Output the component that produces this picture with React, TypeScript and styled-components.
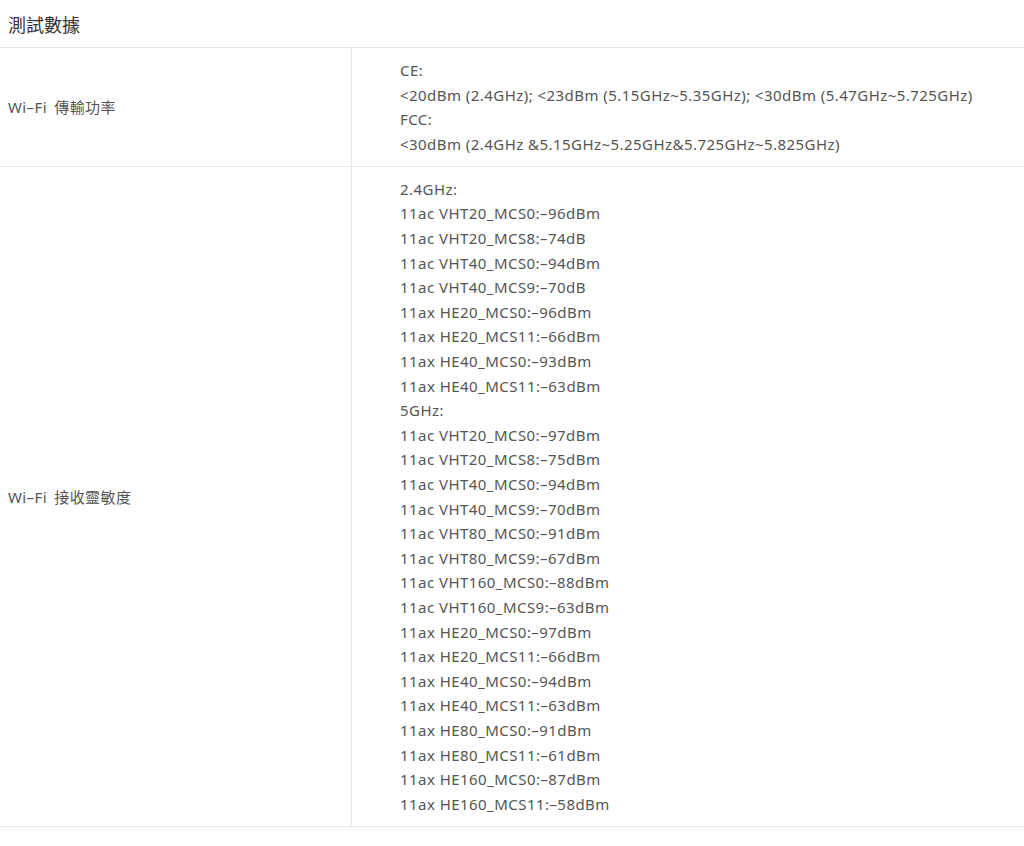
import React from 'react'
import styled, { createGlobalStyle } from 'styled-components';

const GlobalStyle = createGlobalStyle`
    body {
        margin: 0;
        background: #fff;
        font-family: "Noto Sans", "Noto Sans CJK TC", sans-serif;
    }
`;

const powerLines = [
    'CE:',
    '<20dBm (2.4GHz); <23dBm (5.15GHz~5.35GHz); <30dBm (5.47GHz~5.725GHz)',
    'FCC:',
    '<30dBm (2.4GHz &5.15GHz~5.25GHz&5.725GHz~5.825GHz)',
];

const sensLines = [
    '2.4GHz:',
    '11ac VHT20_MCS0:–96dBm',
    '11ac VHT20_MCS8:–74dB',
    '11ac VHT40_MCS0:–94dBm',
    '11ac VHT40_MCS9:–70dB',
    '11ax HE20_MCS0:–96dBm',
    '11ax HE20_MCS11:–66dBm',
    '11ax HE40_MCS0:–93dBm',
    '11ax HE40_MCS11:–63dBm',
    '5GHz:',
    '11ac VHT20_MCS0:–97dBm',
    '11ac VHT20_MCS8:–75dBm',
    '11ac VHT40_MCS0:–94dBm',
    '11ac VHT40_MCS9:–70dBm',
    '11ac VHT80_MCS0:–91dBm',
    '11ac VHT80_MCS9:–67dBm',
    '11ac VHT160_MCS0:–88dBm',
    '11ac VHT160_MCS9:–63dBm',
    '11ax HE20_MCS0:–97dBm',
    '11ax HE20_MCS11:–66dBm',
    '11ax HE40_MCS0:–94dBm',
    '11ax HE40_MCS11:–63dBm',
    '11ax HE80_MCS0:–91dBm',
    '11ax HE80_MCS11:–61dBm',
    '11ax HE160_MCS0:–87dBm',
    '11ax HE160_MCS11:–58dBm',
];

const rows = [
    { label: 'Wi–Fi 傳輸功率', lines: powerLines },
    { label: 'Wi–Fi 接收靈敏度', lines: sensLines },
];

export default function App() {
    return (
        <Page>
            <GlobalStyle />
            <Title>測試數據</Title>
            <Table>
                {rows.map(row => (
                    <Row key={row.label}>
                        <Label>{row.label}</Label>
                        <Value>
                            {row.lines.map((l, i) => <Line key={i}>{l}</Line>)}
                        </Value>
                    </Row>
                ))}
            </Table>
        </Page>
    )
}

const Page = styled.div`
    width: 1024px;
    color: #555;
`;
const Title = styled.h2`
    margin: 0;
    height: 47px;
    display: flex;
    align-items: center;
    padding: 0 8px;
    font-size: 18px;
    font-weight: normal;
    color: #333;
    border-bottom: 1px solid #e6e6e6;
`;
const Table = styled.div`
    display: flex;
    flex-direction: column;
`;
const Row = styled.div`
    display: grid;
    grid-template-columns: 352px 1fr;
    border-bottom: 1px solid #e6e6e6;
`;
const Label = styled.div`
    display: flex;
    align-items: center;
    padding: 0 8px;
    font-size: 15px;
    letter-spacing: 0.4px;
    word-spacing: 3px;
    color: #555;
    border-right: 1px solid #e6e6e6;
`;
const Value = styled.div`
    padding: 10px 0 9.5px 48px;
    font-size: 15px;
    line-height: 24.6px;
    letter-spacing: 0.45px;
    color: #555;
`;
const Line = styled.div`
    white-space: nowrap;
`;
